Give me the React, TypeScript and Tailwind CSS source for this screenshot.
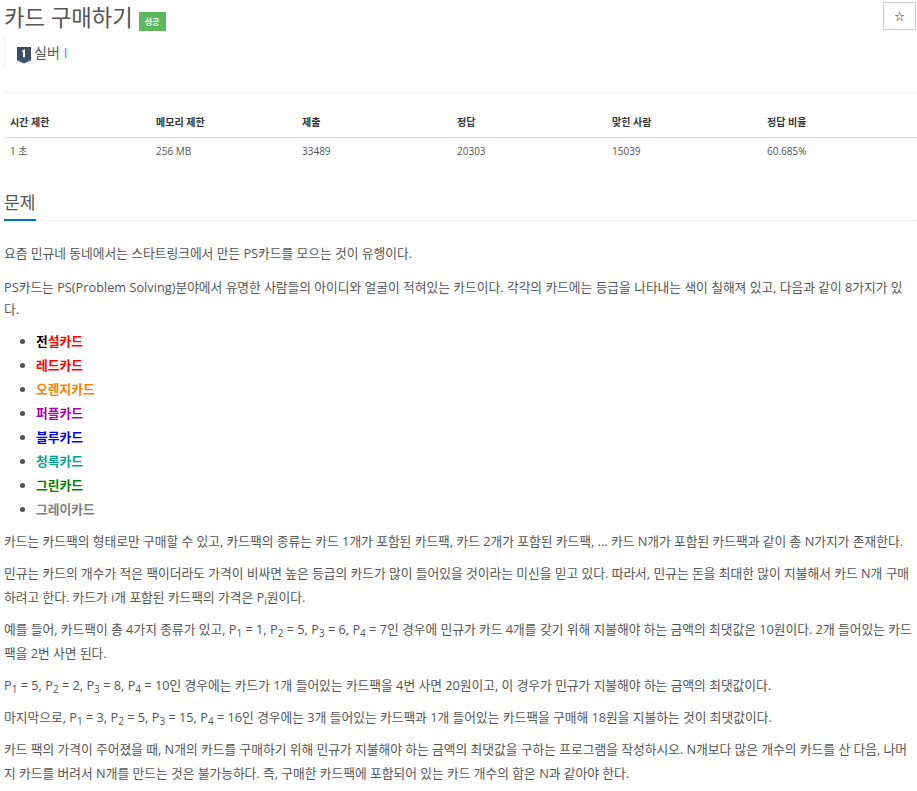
const cols = ["시간 제한", "메모리 제한", "제출", "정답", "맞힌 사람", "정답 비율"];
const vals = ["1 초", "256 MB", "33489", "20303", "15039", "60.685%"];

const cards = [
  { name: "레드카드", color: "text-[#ff0000]" },
  { name: "오렌지카드", color: "text-[#ff8000]" },
  { name: "퍼플카드", color: "text-[#aa00aa]" },
  { name: "블루카드", color: "text-[#0000ff]" },
  { name: "청록카드", color: "text-[#00a495]" },
  { name: "그린카드", color: "text-[#008000]" },
  { name: "그레이카드", color: "text-[#808080]" },
];

function P({ n }: { n: number }) {
  return (
    <>
      P<sub className="text-[10px]">{n}</sub>
    </>
  );
}

export default function App() {
  return (
    <main
      className="w-[917px] h-[791px] overflow-hidden bg-white pl-[4px] text-[#555555] text-[12.75px] leading-[22px]"
      style={{ fontFamily: '"Open Sans", "Noto Sans CJK KR", sans-serif' }}
    >
      <div className="flex items-start justify-between pr-[1px]">
        <div className="flex items-start h-[36px]">
          <h1 className="text-[22.25px] leading-[35px] font-normal text-[#555555]">카드 구매하기</h1>
          <span className="ml-[6px] mt-[12px] w-[27px] h-[19px] flex items-center justify-center bg-[#5cb85c] text-white text-[8px] font-bold">
            성공
          </span>
        </div>
        <button className="mt-[2px] w-[33px] h-[28px] border border-[#cccccc] flex items-center justify-center text-[#333333] text-[10px]">
          ☆
        </button>
      </div>

      <div className="mt-[2px] h-[31px] border-l border-[#eeeeee] pl-[12px] pb-[2px] flex items-center gap-[3px] text-[14px]">
        <svg width="14" height="17" viewBox="0 0 14 17" className="mt-[5px]">
          <path d="M0 0h14v12.500l-7 3-7-3z" fill="#3b4f66" />
          <path d="M0 13.500l7 3 7-3v-1l-7 3-7-3z" fill="#3b4f66" />
          <path d="M5 3.500l3-1.200v8h-2v-5.500l-1 .4z" fill="#ffffff" />
        </svg>
        <span>
          실버 <span className="text-[#27a0e8]">I</span>
        </span>
      </div>

      <div className="mt-[23px] border-t border-[#eeeeee]">
        <div className="grid grid-cols-[146px_146px_155px_155px_155px_155px] h-[45px] items-center border-b border-[#dddddd] pl-[6px] pt-[14px] text-[10px] font-bold text-[#333333]">
          {cols.map((c) => (
            <div key={c}>{c}</div>
          ))}
        </div>
        <div className="grid grid-cols-[146px_146px_155px_155px_155px_155px] h-[25px] items-center pl-[6px] text-[10px]">
          {vals.map((v) => (
            <div key={v}>{v}</div>
          ))}
        </div>
      </div>

      <div className="mt-[13px] border-b border-dotted border-[#e5e5e5]">
        <h2 className="inline-block w-[32px] text-[17px] leading-[27px] pt-[13px] pb-[3px] font-normal border-b-2 border-[#0076c0] mb-[-1px] align-bottom">
          문제
        </h2>
      </div>

      <p className="mt-[21px]">요즘 민규네 동네에서는 스타트링크에서 만든 PS카드를 모으는 것이 유행이다.</p>
      <p className="mt-[12px]">
        PS카드는 PS(Problem Solving)분야에서 유명한 사람들의 아이디와 얼굴이 적혀있는 카드이다. 각각의 카드에는 등급을 나타내는 색이 칠해져 있고, 다음과 같이 8가지가 있다.
      </p>

      <ul className="mt-[9px] pl-[32px] list-disc font-bold leading-[24px] marker:text-[#555555]">
        <li>
          <span className="text-black">전</span>
          <span className="text-[#ff0000]">설카드</span>
        </li>
        {cards.map((c) => (
          <li key={c.name} className={c.color}>
            {c.name}
          </li>
        ))}
      </ul>

      <p className="mt-[9px]">
        카드는 카드팩의 형태로만 구매할 수 있고, 카드팩의 종류는 카드 1개가 포함된 카드팩, 카드 2개가 포함된 카드팩, ... 카드 N개가 포함된 카드팩과 같이 총 N가지가 존재한다.
      </p>
      <p className="mt-[9px] leading-[24px]">
        민규는 카드의 개수가 적은 팩이더라도 가격이 비싸면 높은 등급의 카드가 많이 들어있을 것이라는 미신을 믿고 있다. 따라서, 민규는 돈을 최대한 많이 지불해서 카드 N개 구매하려고 한다. 카드가 i개 포함된 카드팩의 가격은 P<sub className="text-[10px]">i</sub>원이다.
      </p>
      <p className="mt-[8px] leading-[24px]">
        예를 들어, 카드팩이 총 4가지 종류가 있고, <P n={1} /> = 1, <P n={2} /> = 5, <P n={3} /> = 6, <P n={4} /> = 7인 경우에 민규가 카드 4개를 갖기 위해 지불해야 하는 금액의 최댓값은 10원이다. 2개 들어있는 카드팩을 2번 사면 된다.
      </p>
      <p className="mt-[8px] leading-[24px]">
        <P n={1} /> = 5, <P n={2} /> = 2, <P n={3} /> = 8, <P n={4} /> = 10인 경우에는 카드가 1개 들어있는 카드팩을 4번 사면 20원이고, 이 경우가 민규가 지불해야 하는 금액의 최댓값이다.
      </p>
      <p className="mt-[8px] leading-[24px]">
        마지막으로, <P n={1} /> = 3, <P n={2} /> = 5, <P n={3} /> = 15, <P n={4} /> = 16인 경우에는 3개 들어있는 카드팩과 1개 들어있는 카드팩을 구매해 18원을 지불하는 것이 최댓값이다.
      </p>
      <p className="mt-[8px] leading-[24px]">
        카드 팩의 가격이 주어졌을 때, N개의 카드를 구매하기 위해 민규가 지불해야 하는 금액의 최댓값을 구하는 프로그램을 작성하시오. N개보다 많은 개수의 카드를 산 다음, 나머지 카드를 버려서 N개를 만드는 것은 불가능하다. 즉, 구매한 카드팩에 포함되어 있는 카드 개수의 합은 N과 같아야 한다.
      </p>
    </main>
  );
}
